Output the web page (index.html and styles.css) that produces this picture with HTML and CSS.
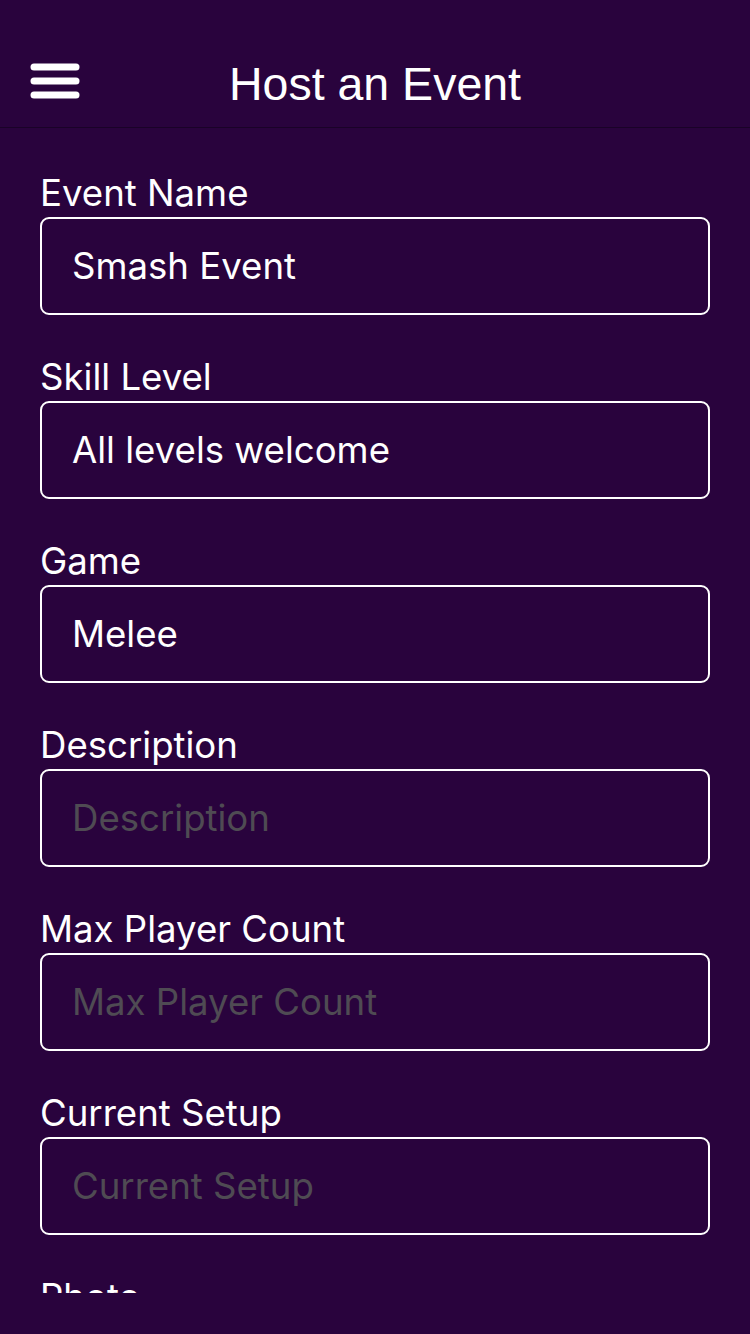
FILE: index.html
```html
<!DOCTYPE html>
<html lang="en">
<head>
<meta charset="utf-8">
<title>Host an Event</title>
<link rel="stylesheet" href="styles.css">
</head>
<body>
<div class="app">
  <header class="topbar">
    <button class="menu" aria-label="Menu">
      <svg width="50" height="36" viewBox="0 0 50 36">
        <rect x="0.5" y="0.5" width="49" height="7" rx="3.5" fill="#fff"/>
        <rect x="0.5" y="14.5" width="49" height="7" rx="3.5" fill="#fff"/>
        <rect x="0.5" y="28.5" width="49" height="7" rx="3.5" fill="#fff"/>
      </svg>
    </button>
    <h1 class="title">Host an Event</h1>
    <span class="spacer"></span>
  </header>
  <main class="form">
    <div class="field">
      <label class="label">Event Name</label>
      <input class="input" type="text" value="Smash Event">
    </div>
    <div class="field">
      <label class="label">Skill Level</label>
      <input class="input" type="text" value="All levels welcome">
    </div>
    <div class="field">
      <label class="label">Game</label>
      <input class="input" type="text" value="Melee">
    </div>
    <div class="field">
      <label class="label">Description</label>
      <input class="input" type="text" placeholder="Description">
    </div>
    <div class="field">
      <label class="label">Max Player Count</label>
      <input class="input" type="text" placeholder="Max Player Count">
    </div>
    <div class="field">
      <label class="label">Current Setup</label>
      <input class="input" type="text" placeholder="Current Setup">
    </div>
    <div class="field">
      <label class="label">Photo</label>
    </div>
  </main>
</div>
</body>
</html>
```

FILE: styles.css
```css
html, body {
  margin: 0;
  padding: 0;
  background: #29033d;
}
body {
  width: 750px;
  height: 1334px;
  overflow: hidden;
  font-family: Inter, "Liberation Sans", sans-serif;
  color: #fff;
}
.app {
  display: flex;
  flex-direction: column;
  height: 1334px;
}
.topbar {
  display: grid;
  grid-template-columns: 1fr auto 1fr;
  align-items: center;
  height: 87px;
  padding-top: 40px;
  border-bottom: 1px solid #1a0228;
}
.menu {
  justify-self: start;
  margin-left: 30px;
  padding: 0;
  border: 0;
  background: none;
  display: flex;
  margin-top: -5px;
}
.title {
  margin: 0;
  font-family: "Liberation Sans", Arial, sans-serif;
  font-weight: 400;
  font-size: 46.5px;
  line-height: 56px;
  color: #fff;
}
.form {
  flex: none;
  height: 1120px;
  overflow: hidden;
  padding: 45px 40px 0;
  display: flex;
  flex-direction: column;
  gap: 42px;
}
.field {
  display: flex;
  flex-direction: column;
  gap: 4px;
}
.label {
  font-size: 36.6px;
  line-height: 40px;
  color: #fff;
}
.input {
  box-sizing: border-box;
  width: 670px;
  height: 98px;
  margin: 0;
  padding: 0 30px;
  border: 2px solid #fff;
  border-radius: 9px;
  background: transparent;
  color: #fff;
  font-family: Inter, "Liberation Sans", sans-serif;
  font-size: 36.6px;
  outline: none;
}
.input::placeholder {
  color: #4f4b53;
  opacity: 1;
}
```
